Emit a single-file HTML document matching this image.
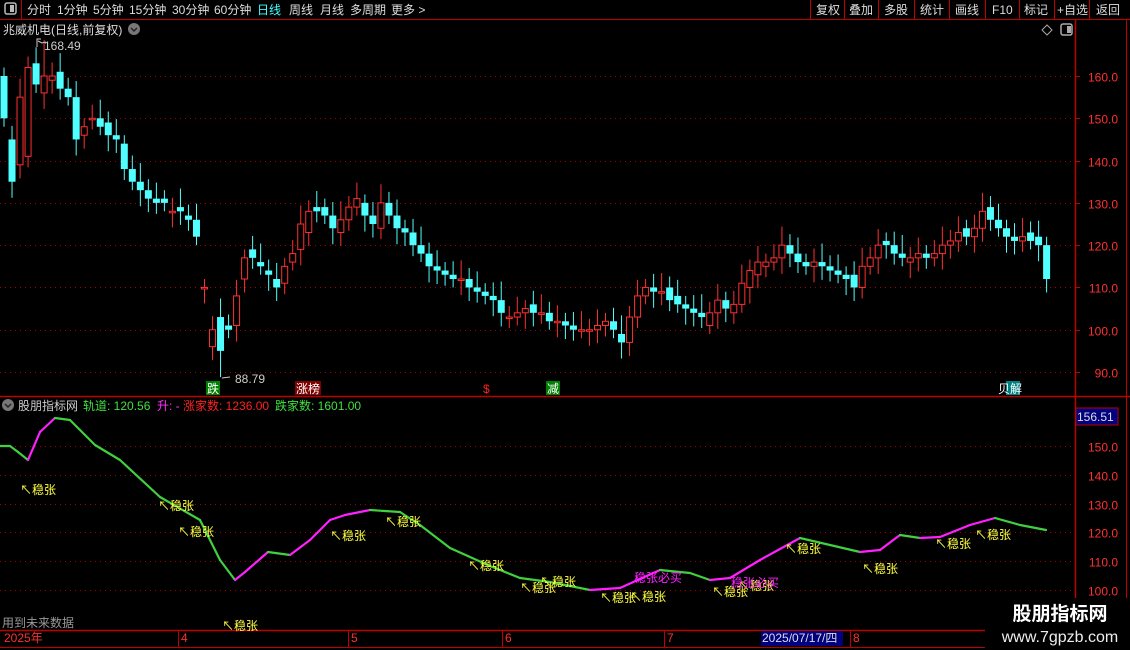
<!DOCTYPE html>
<html><head><meta charset="utf-8">
<style>
html,body{margin:0;padding:0;background:#000;width:1130px;height:650px;overflow:hidden;font-family:"Liberation Sans","Noto Sans CJK SC",sans-serif;}
svg{position:absolute;left:0;top:0}
text{font-family:"Liberation Sans","Noto Sans CJK SC",sans-serif}
</style></head><body>
<svg id="s" width="1130" height="650" xmlns="http://www.w3.org/2000/svg">
<rect width="1130" height="650" fill="#000"/>
<line x1="0" y1="19.5" x2="1130" y2="19.5" stroke="#c00000"/>
<line x1="21.5" y1="0" x2="21.5" y2="19" stroke="#c00000"/>
<rect x="5" y="3" width="11" height="11" rx="2" fill="none" stroke="#bbb" stroke-width="1.5"/><rect x="10" y="5" width="4" height="7" fill="#bbb"/>
<g font-size="12" fill="#ddd">
<text x="27" y="14">分时</text><text x="57" y="14">1分钟</text><text x="93" y="14">5分钟</text><text x="129" y="14">15分钟</text><text x="172" y="14">30分钟</text><text x="214" y="14">60分钟</text>
<text x="257" y="14" fill="#40ffff">日线</text><text x="289" y="14">周线</text><text x="320" y="14">月线</text><text x="350" y="14">多周期</text><text x="391" y="14">更多 &gt;</text>
<text x="816" y="14">复权</text><text x="849" y="14">叠加</text><text x="884" y="14">多股</text><text x="920" y="14">统计</text><text x="955" y="14">画线</text><text x="992" y="14">F10</text><text x="1024" y="14">标记</text><text x="1057" y="14">+自选</text><text x="1096" y="14">返回</text>
</g>
<g stroke="#c00000"><line x1="810.5" y1="0" x2="810.5" y2="19"/><line x1="844.5" y1="0" x2="844.5" y2="19"/><line x1="878.5" y1="0" x2="878.5" y2="19"/><line x1="914.5" y1="0" x2="914.5" y2="19"/><line x1="949.5" y1="0" x2="949.5" y2="19"/><line x1="985.5" y1="0" x2="985.5" y2="19"/><line x1="1019.5" y1="0" x2="1019.5" y2="19"/><line x1="1054.5" y1="0" x2="1054.5" y2="19"/><line x1="1089.5" y1="0" x2="1089.5" y2="19"/></g>
<text x="3" y="34" font-size="12" fill="#ddd">兆威机电(日线,前复权)</text>
<circle cx="134" cy="29" r="6" fill="#777"/><path d="M131 28l3 3 3-3" stroke="#222" fill="none" stroke-width="1.5"/>
<path d="M1047 25l5 5-5 5-5-5z" fill="none" stroke="#aaa"/>
<rect x="1061" y="24" width="11" height="11" rx="2" fill="none" stroke="#aaa" stroke-width="1.5"/><rect x="1067" y="26" width="4" height="7" fill="#aaa"/>
<line x1="1075.5" y1="20" x2="1075.5" y2="630" stroke="#c00000" stroke-width="1.5"/>
<line x1="1126.5" y1="20" x2="1126.5" y2="650" stroke="#c00000"/>
<line x1="0" y1="396.5" x2="1130" y2="396.5" stroke="#c00000" stroke-width="1.5"/>
<line x1="0" y1="630.5" x2="1075" y2="630.5" stroke="#c00000" stroke-width="1.5"/>
<line x1="0" y1="647.5" x2="1130" y2="647.5" stroke="#c00000"/>
<g id="grid"></g>
<g id="candles"></g>
<g id="ind"></g>
<g font-size="12" fill="#ff3030" text-anchor="end" id="axis"></g>
<g font-size="12" fill="#ccc"><text x="44" y="50">168.49</text><text x="235" y="383">88.79</text></g>
<path d="M37 47v-8h4M38 41l4 2 4-1" stroke="#ccc" fill="none"/><path d="M222 378l8-1" stroke="#ccc"/>
<g font-size="12">
<rect x="206" y="381" width="14" height="14" fill="#008000"/><text x="207" y="393" fill="#fff">跌</text>
<rect x="295" y="381" width="26" height="14" fill="#800000"/><text x="296" y="393" fill="#fff">涨榜</text>
<text x="483" y="393" fill="#ff2020">$</text>
<rect x="546" y="381" width="14" height="14" fill="#008000"/><text x="547" y="393" fill="#fff">减</text>
<rect x="1006" y="381" width="14" height="14" fill="#008080"/><text x="998" y="393" fill="#fff">贝解</text>
</g>
<circle cx="8" cy="405" r="6" fill="#777"/><path d="M5 404l3 3 3-3" stroke="#222" fill="none" stroke-width="1.5"/>
<g font-size="12"><text x="18" y="410" fill="#ccc">股朋指标网</text><text x="83" y="410" fill="#40e040">轨道: 120.56</text><text x="157" y="410" fill="#ff30ff">升: -</text><text x="183" y="410" fill="#ff2020">涨家数: 1236.00</text><text x="275" y="410" fill="#40e040">跌家数: 1601.00</text></g>
<rect x="1076" y="408" width="42" height="17" fill="#000080" stroke="#c00000"/><text x="1077" y="421" font-size="12" fill="#ddd">156.51</text>
<text x="2" y="627" font-size="12" fill="#999">用到未来数据</text>
<g font-size="12" fill="#ff3030"><text x="4" y="642">2025年</text><text x="181" y="642">4</text><text x="351" y="642">5</text><text x="505" y="642">6</text><text x="667" y="642">7</text><text x="853" y="642">8</text></g>
<g stroke="#c00000"><line x1="178.5" y1="631" x2="178.5" y2="647"/><line x1="348.5" y1="631" x2="348.5" y2="647"/><line x1="502.5" y1="631" x2="502.5" y2="647"/><line x1="664.5" y1="631" x2="664.5" y2="647"/><line x1="850.5" y1="631" x2="850.5" y2="647"/></g>
<rect x="761" y="631" width="82" height="15" fill="#000080"/><text x="762" y="642" font-size="12" fill="#ddd">2025/07/17/四</text>
<rect x="985" y="598" width="145" height="52" fill="#000"/>
<text x="1060" y="620" font-size="19" font-weight="bold" fill="#fff" text-anchor="middle">股朋指标网</text>
<text x="1060" y="642" font-size="16" fill="#eee" text-anchor="middle">www.7gpzb.com</text>
</svg>
<script>
var NS="http://www.w3.org/2000/svg";
function el(p,t,a){var e=document.createElementNS(NS,t);for(var k in a)e.setAttribute(k,a[k]);p.appendChild(e);return e;}
var g=document.getElementById('grid'),ax=document.getElementById('axis');
function py(p){return 76+(160-p)*4.229;}
for(var p=90;p<=160;p+=10){var y=Math.round(py(p))+.5;el(g,'line',{x1:0,x2:1075,y1:y,y2:y,stroke:'#a00000','stroke-dasharray':'1 4'});el(ax,'text',{x:1118,y:y+5}).textContent=p.toFixed(1);el(g,'line',{x1:1076,x2:1080,y1:y,y2:y,stroke:'#c00000'});}
function iy(p){return 446+(150-p)*2.88;}
for(var p=100;p<=150;p+=10){var y=Math.round(iy(p))+.5;el(g,'line',{x1:0,x2:1075,y1:y,y2:y,stroke:'#a00000','stroke-dasharray':'1 4'});el(ax,'text',{x:1118,y:y+5}).textContent=p.toFixed(1);}
var closes=[150,135,155,162,158,160,160,157,155,145,148,150,148,146,145,138,135,133,131,130,130,128,128,126,122,110,100,95,100,108,117,117,115,113,110,115,118,125,128,128,127,124,126,129,131,127,125,130,127,124,123,120,118,115,114,113,112,112,110,109,108,107,104,103,104,105,104,104,102,102,101,100,100,100,101,102,100,97,103,108,110,109,109,107,106,105,104,103,104,107,105,106,111,114,116,116,117,120,118,116,115,116,115,114,113,112,110,115,117,120,120,118,117,117,118,117,118,120,121,123,122,124,128,126,124,122,121,122,121,120,112];
var opens=[160,145,139,141,163,156,159,161,157,155,146,150,150,149,146,144,138,135,133,131,131,128,129,127,126,110,96,103,101,101,112,119,116,114,112,111,116,119,123,129,129,127,123,126,129,130,127,124,130,127,124,123,120,118,115,114,113,112,112,110,109,108,107,103,103,104,106,104,104,102,102,101,100,100,100,101,102,99,97,103,108,110,109,110,108,106,105,104,101,104,107,104,106,110,113,115,116,117,120,118,116,115,116,115,114,113,113,110,115,117,121,120,118,116,117,118,117,118,120,121,124,122,124,129,126,124,122,121,123,122,120];
var c=document.getElementById('candles');
for(var i=0;i<closes.length;i++){var x=4+i*8.02,o=opens[i],cl=closes[i];var up=cl>=o;var col=up?'#ff3030':'#50ffff';var hi=Math.max(o,cl)+2+(i*7%5)*0.6,lo=Math.min(o,cl)-2-(i*3%4)*0.6;
if(i==5)hi=168.5;if(i==27)lo=88.8;
el(c,'line',{x1:x,x2:x,y1:py(hi),y2:py(lo),stroke:col});
var y1=py(Math.max(o,cl)),h=Math.max(1.5,py(Math.min(o,cl))-y1);
if(up)el(c,'rect',{x:x-3,y:y1,width:6,height:h,fill:'#000',stroke:col});else el(c,'rect',{x:x-3.5,y:y1,width:7,height:h,fill:col});}
var pts=[[0,446],[10,446],[18,452],[28,460],[40,432],[55,418],[70,420],[95,445],[120,460],[160,497],[200,520],[220,560],[235,580],[245,572],[268,552],[290,555],[310,540],[330,520],[345,515],[370,510],[400,512],[420,525],[450,548],[490,566],[520,578],[550,582],[590,590],[620,588],[660,570],[690,573],[710,580],[730,578],[760,560],[800,538],[830,545],[860,552],[880,550],[900,535],[920,538],[940,537],[970,525],[995,518],[1020,525],[1046,530]];
var ind=document.getElementById('ind');
for(var i=0;i<pts.length-1;i++){var a=pts[i],b=pts[i+1];el(ind,'line',{x1:a[0],y1:a[1],x2:b[0],y2:b[1],stroke:b[1]<a[1]?'#ff20ff':'#40d040','stroke-width':2.2,'stroke-linecap':'round'});}
var lab=[[20,494],[158,510],[178,536],[330,540],[385,526],[468,570],[520,592],[540,586],[600,602],[630,601],[712,596],[738,590],[785,553],[862,573],[935,548],[975,539],[222,630]];
lab.forEach(function(l){var t=el(ind,'text',{x:l[0],y:l[1],'font-size':12,fill:'#ffff40'});t.textContent='↖稳张';});
[[634,582],[731,587]].forEach(function(l){var t=el(ind,'text',{x:l[0],y:l[1],'font-size':12,fill:'#ff20ff'});t.textContent='稳张必买';});
</script>
</body></html>
